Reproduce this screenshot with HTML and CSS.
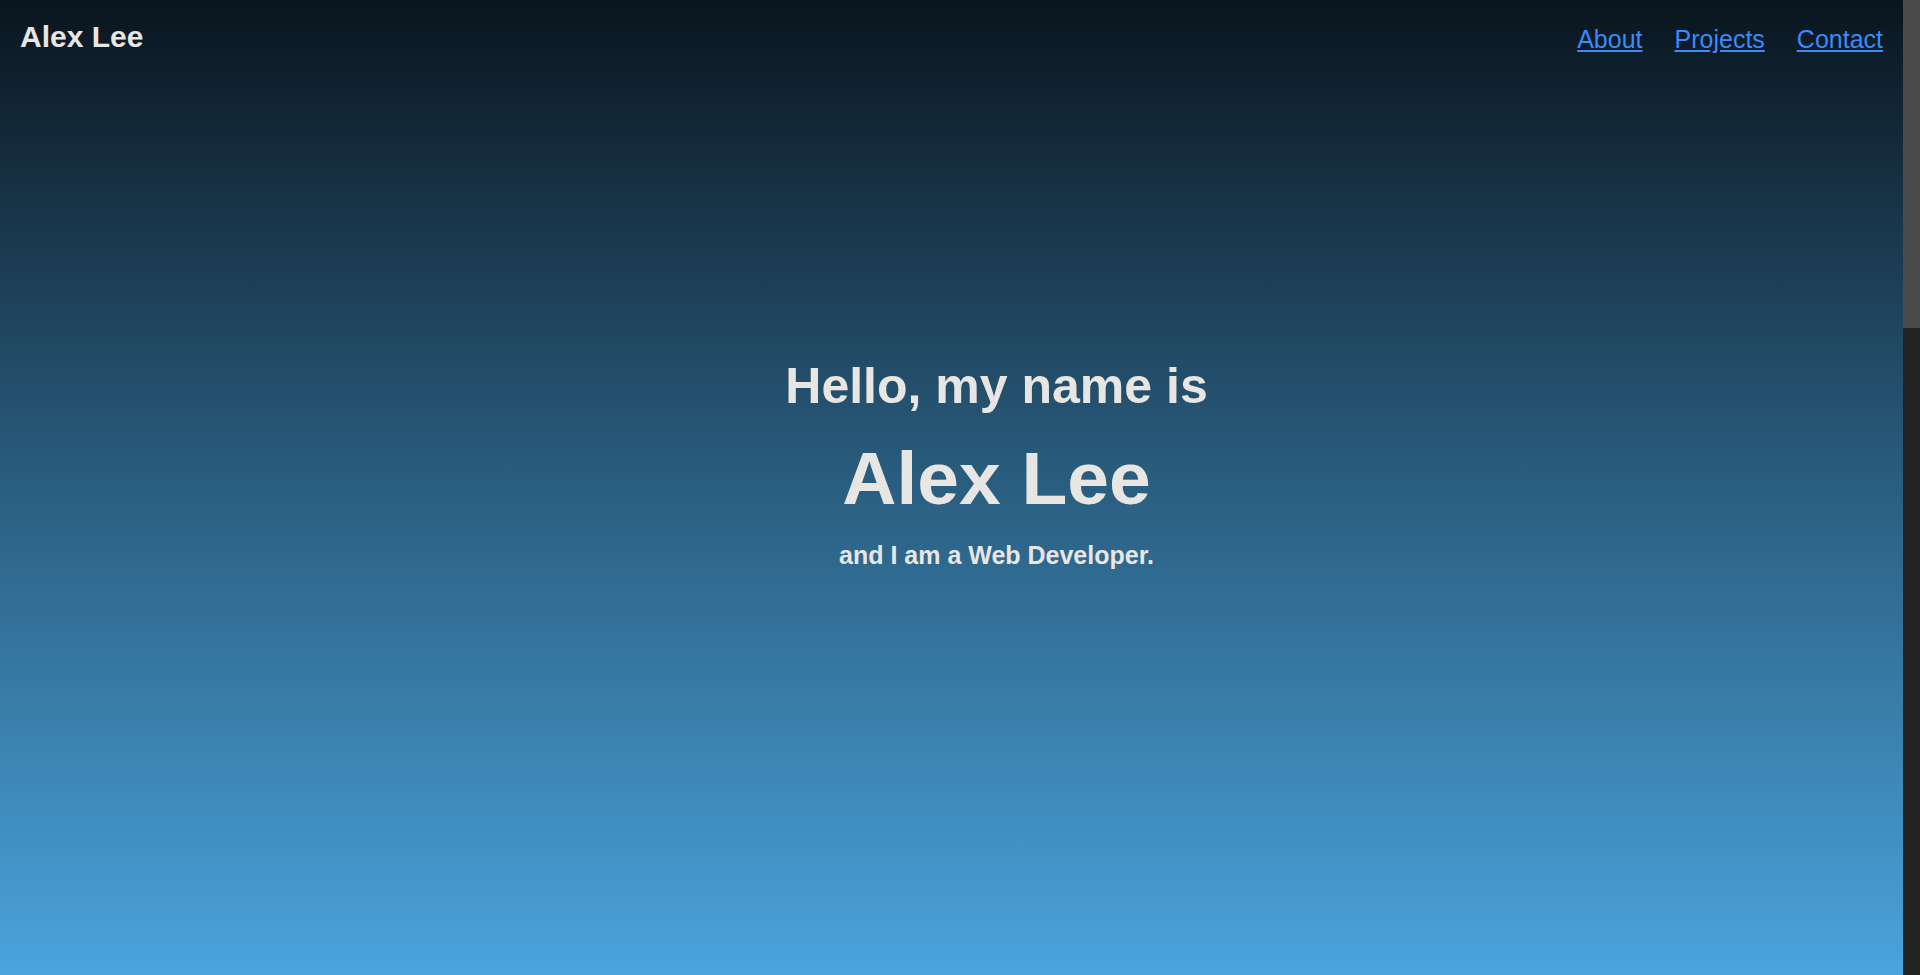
FILE: index.html
```html
<!DOCTYPE html>
<html lang="en">
<head>
<meta charset="utf-8">
<title>Alex Lee</title>
<link rel="stylesheet" href="styles.css">
</head>
<body>
<div class="page">
  <main class="main">
    <section class="hero">
      <header class="topbar">
        <div class="logo">Alex Lee</div>
        <nav class="nav">
          <a href="#about">About</a>
          <a href="#projects">Projects</a>
          <a href="#contact">Contact</a>
        </nav>
      </header>
      <div class="intro">
        <h2 class="hello">Hello, my name is</h2>
        <h1 class="name">Alex Lee</h1>
        <p class="role">and I am a Web Developer.</p>
      </div>
    </section>
    <section class="block" id="about"></section>
    <section class="block" id="projects"></section>
    <section class="block" id="contact"></section>
  </main>
  <div class="scrollbar" aria-hidden="true">
    <div class="scrollbar-thumb"></div>
  </div>
</div>
</body>
</html>
```
FILE: styles.css
```css
html::-webkit-scrollbar {
  display: none;
}
html {
  scrollbar-width: none;
}
body {
  margin: 0;
  font-family: "Liberation Sans", Arial, sans-serif;
  color: #e8e6e3;
  background: #181a1b;
}
.page {
  display: flex;
  align-items: flex-start;
}
.main {
  flex: 1;
  min-width: 0;
}
.scrollbar {
  width: 17px;
  flex: none;
  height: 100vh;
  position: sticky;
  top: 0;
  background: #232323;
}
.scrollbar-thumb {
  height: 328px;
  background: #4b4b4b;
}
.hero {
  min-height: 975px;
  background: linear-gradient(to bottom, #0a151e 0%, #2a5e80 50%, #4ba4dd 100%);
  display: flex;
  flex-direction: column;
}
.topbar {
  display: flex;
  justify-content: space-between;
  align-items: flex-start;
  padding: 20px 20px;
}
.logo {
  font-size: 30px;
  font-weight: bold;
}
.nav {
  display: flex;
  gap: 32px;
  padding-top: 5px;
}
.nav a {
  font-size: 25px;
  color: #3a8bfa;
  text-decoration: underline;
}
.intro {
  padding: 283px 0 0 90px;
  display: flex;
  flex-direction: column;
  align-items: center;
  gap: 20px;
  text-align: center;
}
.hello {
  margin: 0;
  font-size: 50px;
  font-weight: bold;
}
.name {
  margin: 0;
  font-size: 75px;
  font-weight: bold;
}
.role {
  margin: 0;
  font-size: 25px;
  font-weight: bold;
}
.block {
  height: 641px;
}
```
